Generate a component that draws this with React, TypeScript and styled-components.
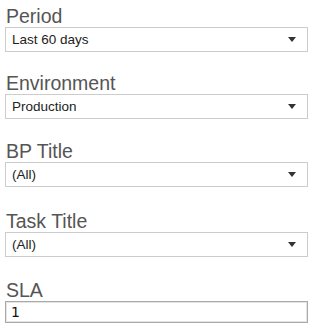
import styled, { createGlobalStyle } from "styled-components";

const GlobalStyle = createGlobalStyle`
  body {
    margin: 0;
    background: #fff;
    font-family: "Liberation Sans", Arial, sans-serif;
  }
`;

const Panel = styled.div`
  display: flex;
  flex-direction: column;
  padding: 5px 0 0 5px;
  width: 303px;
`;

const Field = styled.div<{ $gap: number }>`
  display: flex;
  flex-direction: column;
  margin-bottom: ${({ $gap }) => $gap}px;
`;

const Label = styled.div`
  font-size: 19.5px;
  line-height: 22px;
  color: #555;
  padding-left: 1px;
`;

const Select = styled.div`
  box-sizing: border-box;
  height: 25px;
  display: flex;
  align-items: center;
  justify-content: space-between;
  border: 1px solid #ccc;
  background: #fff;
  padding: 0 11px 0 6px;
  font-size: 13.5px;
  color: #222;
`;

const Arrow = styled.span`
  width: 0;
  height: 0;
  border-left: 4px solid transparent;
  border-right: 4px solid transparent;
  border-top: 5px solid #333;
`;

const Input = styled.div`
  box-sizing: border-box;
  height: 22px;
  display: flex;
  align-items: center;
  border: 1px solid #a9a9a9;
  box-shadow: inset 0 0 0 1px #e4e4e4;
  padding-left: 5px;
  font-family: "DejaVu Sans", sans-serif;
  font-size: 14px;
  color: #111;
`;

const fields = [
  { label: "Period", value: "Last 60 days", gap: 20 },
  { label: "Environment", value: "Production", gap: 21 },
  { label: "BP Title", value: "(All)", gap: 23 },
  { label: "Task Title", value: "(All)", gap: 22 },
];

export default function App() {
  return (
    <>
      <GlobalStyle />
      <Panel>
        {fields.map((f) => (
          <Field key={f.label} $gap={f.gap}>
            <Label>{f.label}</Label>
            <Select>
              <span>{f.value}</span>
              <Arrow />
            </Select>
          </Field>
        ))}
        <Field $gap={0}>
          <Label>SLA</Label>
          <Input>1</Input>
        </Field>
      </Panel>
    </>
  );
}
